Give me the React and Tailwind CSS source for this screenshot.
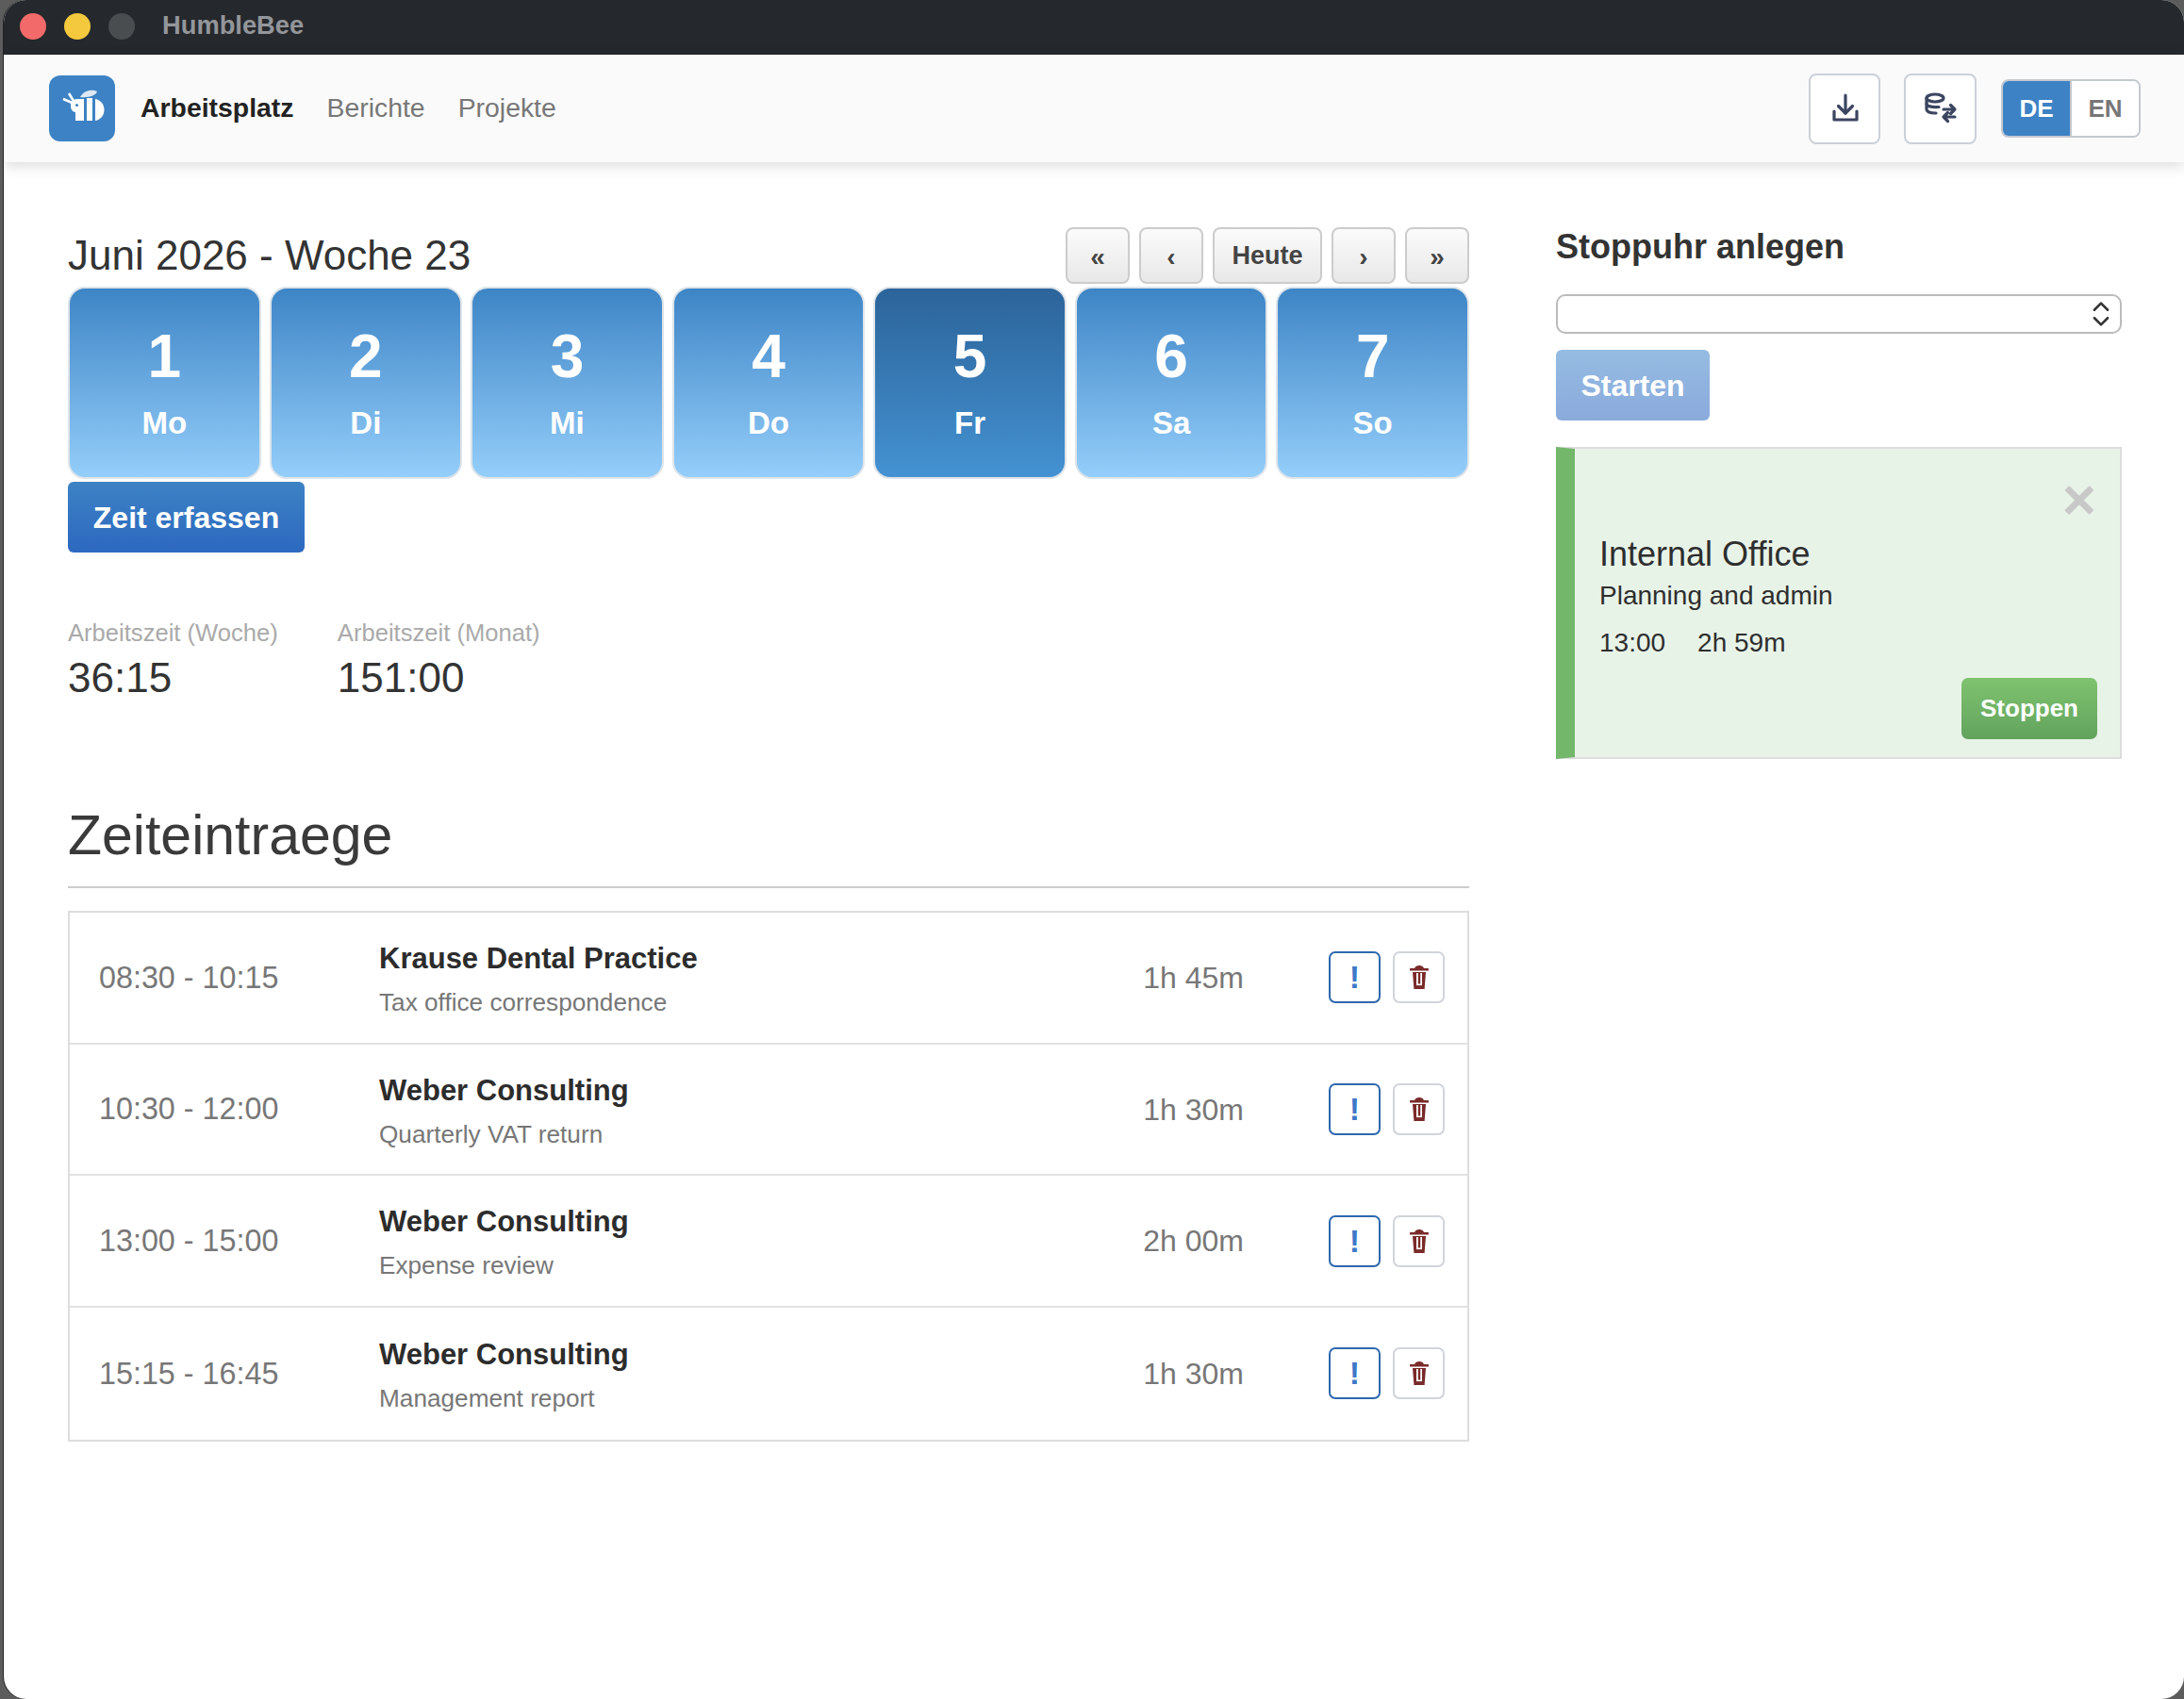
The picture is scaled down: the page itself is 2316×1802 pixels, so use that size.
// HumbleBee workspace: week strip, time entries and the stopwatch panel.
import { ChevronsUpDown } from 'lucide-react';

const DAYS = [
  { num: 1, label: 'Mo' },
  { num: 2, label: 'Di' },
  { num: 3, label: 'Mi' },
  { num: 4, label: 'Do' },
  { num: 5, label: 'Fr', active: true },
  { num: 6, label: 'Sa' },
  { num: 7, label: 'So' },
];

const ENTRIES = [
  { time: '08:30 - 10:15', client: 'Krause Dental Practice', task: 'Tax office correspondence', total: '1h 45m' },
  { time: '10:30 - 12:00', client: 'Weber Consulting', task: 'Quarterly VAT return', total: '1h 30m' },
  { time: '13:00 - 15:00', client: 'Weber Consulting', task: 'Expense review', total: '2h 00m' },
  { time: '15:15 - 16:45', client: 'Weber Consulting', task: 'Management report', total: '1h 30m' },
];

function BeeLogo() {
  return (
    <svg viewBox="0 0 70 70" className="h-[70px] w-[70px]">
      <path d="M33 23 C36 16 46 14 51 17 C50 21 42 24 33 23 Z" fill="#dce9f5" />
      <path d="M24.5 29 L15 25 M26 27 L21 19" stroke="#fff" strokeWidth="2.6" fill="none" />
      <path d="M37 25 H30 C25.5 25 23 28.5 23 32.5 C23 36 25 38.5 28 39 V48 H37 Z" fill="#fff" />
      <circle cx="29.5" cy="31.5" r="1.5" fill="#3d82c4" />
      <path d="M40 24 H46 V48 H40 Z" fill="#fff" />
      <path d="M49 25 C55 26 58.5 31 58.5 36.5 C58.5 42 55 47 49 48 Z" fill="#fff" />
    </svg>
  );
}

function DownloadIcon() {
  return (
    <svg viewBox="0 0 36 36" className="h-[36px] w-[36px]" fill="none" stroke="#3b4560" strokeWidth="3.2" strokeLinecap="round" strokeLinejoin="round">
      <path d="M19 4 V23" />
      <path d="M11.5 15.5 L19 23 L26.5 15.5" />
      <path d="M7 21 V30 H31 V21" />
    </svg>
  );
}

function DatabaseSwapIcon() {
  return (
    <svg viewBox="0 0 36 36" className="h-[36px] w-[36px]" fill="none" stroke="#3b4560" strokeWidth="3.2" strokeLinecap="round" strokeLinejoin="round">
      <ellipse cx="12" cy="7" rx="9" ry="4" />
      <path d="M3 7 V19 C3 21.5 7 23 13 23" />
      <path d="M3 13 C3 15.5 8 17 16 16.5" />
      <path d="M21 19 H33 M28.5 14.5 L33 19 L28.5 23.5" />
      <path d="M33 27 H21 M25.5 22.5 L21 27 L25.5 31.5" />
    </svg>
  );
}

function TrashIcon() {
  return (
    <svg viewBox="0 0 20 25" className="h-[25px] w-[20px]">
      <path d="M5 3.2 Q6 0 10 0 Q14 0 15 3.2 Z" fill="#7a2a2a" />
      <rect x="0" y="3" width="20" height="2.6" rx="0.6" fill="#7a2a2a" />
      <path d="M3 7 H17 L15.6 25 H4.4 Z" fill="#7a2a2a" />
      <rect x="7" y="8" width="1.8" height="13" fill="#fff" />
      <rect x="11.2" y="8" width="1.8" height="13" fill="#fff" />
      <rect x="7" y="19.5" width="6" height="1.6" fill="#fff" />
    </svg>
  );
}

function PagerButton({ children, wide }) {
  return (
    <button className={`flex h-[60px] items-center justify-center rounded-[8px] border-2 border-[#cccccc] bg-gradient-to-b from-[#fbfbfb] to-[#e8e8e8] text-[#444444] font-bold ${wide ? 'w-[116px] text-[27px]' : 'w-[68px] pt-[3px] text-[28px]'}`}>
      {children}
    </button>
  );
}

function DayCard({ num, label, active }) {
  return (
    <div className={`flex h-[204px] flex-col items-center rounded-[18px] border-2 border-[#dde4ea] pt-[36px] font-bold text-white bg-gradient-to-b ${active ? 'from-[#2c649a] to-[#4492d2]' : 'from-[#3d85c6] to-[#94cefa]'}`}>
      <span className="text-[64px] leading-[72px]">{num}</span>
      <span className="mt-[15px] text-[33px] leading-[40px]">{label}</span>
    </div>
  );
}

function EntryRow({ time, client, task, total }) {
  return (
    <div className="flex h-[139.7px] items-center pl-[31px] pr-[24px]">
      <div className="w-[297px] text-[32.3px] text-[#777777]">{time}</div>
      <div className="flex-1 pt-[5px]">
        <div className="text-[31px] leading-[38px] font-bold text-[#2c2c2c]">{client}</div>
        <div className="mt-[9px] text-[26.2px] leading-[36px] text-[#777777]">{task}</div>
      </div>
      <div className="text-[32px] text-[#777777]">{total}</div>
      <div className="ml-[90px] flex gap-[13px]">
        <button className="flex h-[55px] w-[55px] items-center justify-center rounded-[7px] border-2 border-[#2f68ae] text-[34px] font-bold text-[#3d78c8]">!</button>
        <button className="flex h-[55px] w-[55px] items-center justify-center rounded-[7px] border-2 border-[#d0d4da]">
          <TrashIcon />
        </button>
      </div>
    </div>
  );
}

export default function App() {
  return (
    <div className="h-[1802px] w-[2316px] overflow-hidden bg-[#5c5c5c] pl-[4px] font-['Liberation_Sans',sans-serif]">
      <div className="flex h-full flex-col overflow-hidden rounded-[24px] bg-white shadow-[-1px_0_0_#222222]">
        {/* Window title bar */}
        <div className="flex h-[58px] shrink-0 items-center bg-[#25282c] pb-[3px] pl-[17px]">
          <div className="flex gap-[19px]">
            <span className="h-[28px] w-[28px] rounded-full bg-[#f26a6a]" />
            <span className="h-[28px] w-[28px] rounded-full bg-[#f5c93e]" />
            <span className="h-[28px] w-[28px] rounded-full bg-[#4a4d50]" />
          </div>
          <span className="ml-[29px] text-[27.3px] font-bold text-[#93969b]">HumbleBee</span>
        </div>

        {/* App nav */}
        <nav className="relative flex h-[114px] shrink-0 items-center bg-[#fafafa] pl-[48px] pr-[46px] shadow-[0_4px_14px_rgba(0,0,0,0.14)]">
          <div className="h-[70px] w-[70px] rounded-[12px] bg-[#3d82c4]">
            <BeeLogo />
          </div>
          <div className="ml-[27px] flex gap-[35px] pb-[2px] text-[28.4px]">
            <a className="font-bold text-[#222222]">Arbeitsplatz</a>
            <a className="text-[#777777]">Berichte</a>
            <a className="text-[#777777]">Projekte</a>
          </div>
          <div className="ml-auto flex items-center">
            <button className="flex h-[75px] w-[76px] items-center justify-center rounded-[8px] border-2 border-[#cbd0d9] bg-white">
              <DownloadIcon />
            </button>
            <button className="ml-[25px] flex h-[75px] w-[77px] items-center justify-center rounded-[8px] border-2 border-[#cbd0d9] bg-white">
              <DatabaseSwapIcon />
            </button>
            <div className="ml-[26px] flex h-[62px] w-[148px] overflow-hidden rounded-[8px] border-2 border-[#c4c8d0] text-[26px] font-bold">
              <span className="flex w-[71px] items-center justify-center bg-[#3d82c4] text-white">DE</span>
              <span className="flex flex-1 items-center justify-center border-l-2 border-[#c4c8d0] bg-white text-[#777777]">EN</span>
            </div>
          </div>
        </nav>

        <main className="flex flex-1 gap-[92px] pl-[68px] pt-[69px]">
          {/* Week and entries */}
          <section className="w-[1486px]">
            <div className="flex h-[60px] items-center justify-between">
              <h2 className="text-[44px] text-[#333333]">Juni 2026 - Woche 23</h2>
              <div className="flex gap-[10px]">
                <PagerButton>«</PagerButton>
                <PagerButton>‹</PagerButton>
                <PagerButton wide>Heute</PagerButton>
                <PagerButton>›</PagerButton>
                <PagerButton>»</PagerButton>
              </div>
            </div>

            <div className="mt-[3px] grid grid-cols-7 gap-[9px]">
              {DAYS.map((day) => (
                <DayCard key={day.num} {...day} />
              ))}
            </div>

            <button className="mt-[3px] h-[75px] w-[251px] rounded-[6px] bg-gradient-to-b from-[#3d82c4] to-[#2d68c0] text-[32px] font-bold text-white">
              Zeit erfassen
            </button>

            <div className="mt-[67px] flex gap-[63px]">
              <div>
                <div className="text-[25.6px] leading-[36px] text-[#aaaaaa]">Arbeitszeit (Woche)</div>
                <div className="text-[44px] leading-[60px] text-[#333333]">36:15</div>
              </div>
              <div>
                <div className="text-[25.6px] leading-[36px] text-[#aaaaaa]">Arbeitszeit (Monat)</div>
                <div className="text-[44px] leading-[60px] text-[#333333]">151:00</div>
              </div>
            </div>

            <h1 className="mt-[102px] border-b-2 border-[#cccccc] pb-[19px] text-[59px] leading-[70px] text-[#3a3a3a]">Zeiteintraege</h1>

            <div className="mt-[24px] divide-y-2 divide-[#e2e2e2] border-2 border-[#dddddd]">
              {ENTRIES.map((entry) => (
                <EntryRow key={entry.time} {...entry} />
              ))}
            </div>
          </section>

          {/* Stopwatch */}
          <aside className="w-[600px]">
            <h3 className="text-[36px] leading-[42px] font-bold text-[#333333]">Stoppuhr anlegen</h3>
            <div className="mt-[29px] flex h-[42px] items-center justify-end rounded-[10px] border-2 border-[#bbbbbb] pr-[3px]">
              <ChevronsUpDown className="h-[34px] w-[34px] text-[#333333]" strokeWidth={1.8} />
            </div>
            <button className="mt-[17px] h-[75px] w-[163px] rounded-[6px] bg-gradient-to-b from-[#95bce2] to-[#8aaadc] text-[32px] font-bold text-white">
              Starten
            </button>

            <div className="relative mt-[28px] h-[331px] border-2 border-l-[20px] border-[#dddddd] border-l-[#72b76a] bg-[#e8f3e8] pl-[26px] pr-[24px] pt-[90px]">
              <span className="absolute right-[25px] top-[23px] text-[62px] leading-[62px] font-bold text-[#c8c8c8]">×</span>
              <div className="text-[36px] leading-[44px] text-[#2e2e2e]">Internal Office</div>
              <div className="mt-[4px] text-[28px] leading-[36px] text-[#2e2e2e]">Planning and admin</div>
              <div className="mt-[14px] flex gap-[34px] text-[28px] leading-[36px] text-[#2e2e2e]">
                <span>13:00</span>
                <span>2h 59m</span>
              </div>
              <div className="mt-[19px] flex justify-end">
                <button className="h-[65px] w-[144px] rounded-[7px] bg-gradient-to-b from-[#7fc36f] to-[#62a35d] text-[26px] font-bold text-white">
                  Stoppen
                </button>
              </div>
            </div>
          </aside>
        </main>
      </div>
    </div>
  );
}
